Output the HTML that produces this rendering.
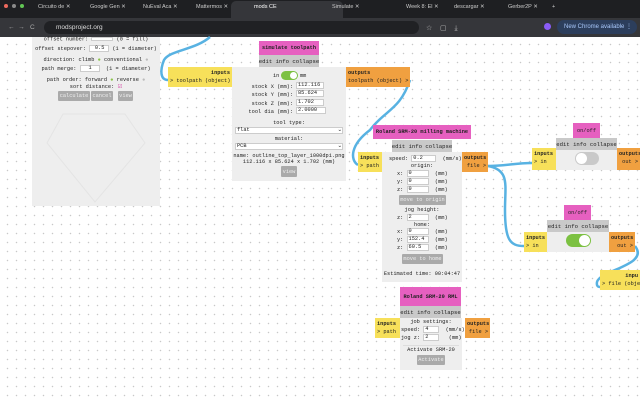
<!DOCTYPE html>
<html><head><meta charset="utf-8"><style>
*{margin:0;padding:0;box-sizing:border-box}
body{width:640px;height:400px;overflow:hidden;position:relative;background:#fff;font-family:"Liberation Mono",monospace;font-size:5.3px;color:#222;white-space:nowrap}
.a{position:absolute}
.grid{left:0;top:37px;width:640px;height:363px;background-image:radial-gradient(circle,#c8c8c8 0.6px,transparent 0.9px);background-size:9px 9px;background-position:3px 3px}
.t{text-align:center;line-height:1}
.pink{background:#e660c0;color:#222;font-weight:bold;display:flex;align-items:center;justify-content:center}
.gray{background:#c9c9c9;display:flex;align-items:center;justify-content:center;font-size:5.6px}
.yel{background:#f7e05a;font-weight:bold;padding:2px 2px;line-height:8px}
.org{background:#f0a040;font-weight:bold;padding:2px 2px;line-height:8px;text-align:right}
.body{background:#eee}
.in{background:#fff;border:1px solid #ccc;height:7px;line-height:5px;display:inline-block;vertical-align:middle;padding-left:1px}
.btn{background:#aaa;color:#eee;border-radius:1px;display:flex;align-items:center;justify-content:center}
.tog{border-radius:7px}
.knob{position:absolute;background:#fff;border-radius:50%}
</style></head><body>
<div class="a" style="left:0;top:0;width:640px;height:18px;background:#1e1f22"></div>
<div class="a" style="left:0;top:18px;width:640px;height:19px;background:#35363a"></div>
<div class="a" style="left:4px;top:4px;width:4px;height:4px;border-radius:50%;background:#ed6a5e"></div>
<div class="a" style="left:12px;top:4px;width:4px;height:4px;border-radius:50%;background:#8a8a8a"></div>
<div class="a" style="left:20px;top:4px;width:4px;height:4px;border-radius:50%;background:#61c554"></div>
<div class="a" style="left:231px;top:1px;width:112px;height:17px;background:#35363a;border-radius:5px 5px 0 0"></div>
<div class="a" style="top:4px;left:0;width:640px;font-family:'Liberation Sans',sans-serif;font-size:5.5px;color:#ccc">
<span class="a" style="left:38px">Circuito de ✕</span><span class="a" style="left:90px">Google Gen ✕</span><span class="a" style="left:143px">NuEval Aca ✕</span><span class="a" style="left:196px">Mattermos ✕</span><span class="a" style="left:254px;color:#fff">mods CE</span><span class="a" style="left:332px">Simulate ✕</span><span class="a" style="left:406px">Week 8: El ✕</span><span class="a" style="left:454px">descargar ✕</span><span class="a" style="left:508px">Gerber2P ✕</span><span class="a" style="left:552px">+</span></div>
<div class="a" style="left:44px;top:21px;width:375px;height:13px;background:#202124;border-radius:7px"></div>
<div class="a" style="left:8px;top:24px;font-family:'Liberation Sans',sans-serif;font-size:6.5px;color:#aaa">←&nbsp;&nbsp;→&nbsp;&nbsp;&nbsp;C</div>
<div class="a" style="left:56px;top:24px;font-family:'Liberation Sans',sans-serif;font-size:6.5px;color:#ddd">modsproject.org</div>
<div class="a" style="left:426px;top:24px;font-family:'Liberation Sans',sans-serif;font-size:7px;color:#bbb">☆&nbsp;&nbsp;&nbsp;&nbsp;▢&nbsp;&nbsp;&nbsp;&nbsp;⤓</div>
<div class="a" style="left:544px;top:23px;width:7px;height:7px;border-radius:50%;background:#8b5cf6"></div>
<div class="a" style="left:557px;top:20px;width:80px;height:14px;border-radius:7px;background:#2c3e5c;color:#a8c7fa;font-family:'Liberation Sans',sans-serif;font-size:6px;line-height:14px;padding-left:7px">New Chrome available ⋮</div>

<div class="a grid"></div>

<svg class="a" style="left:0;top:0" width="640" height="400">
<g fill="none" stroke="#58b2e2" stroke-width="2.5">
<path d="M210 37 C195 50 170 50 164 60 C160 70 160 80 168 80"/>
<path d="M410 80 C400 110 385 110 370 130 C350 145 350 160 358 165"/>
<path d="M488 166 C505 166 515 163 532 163"/>
<path d="M488 166 C510 170 505 185 505 210 C505 240 510 246 524 246"/>
<path d="M635 246 C650 265 600 270 597 282 C596 288 600 287 604 287"/>
</g></svg>

<div class="a body" style="left:32px;top:37px;width:128px;height:169px"></div>
<div class="a t" style="left:32px;top:37px;width:128px">offset number: <span class="in" style="width:22px;height:4px"></span> (0 = fill)</div>
<div class="a t" style="left:32px;top:45px;width:128px">offset stepover: <span class="in" style="width:20px">0.5</span> (1 = diameter)</div>
<div class="a t" style="left:32px;top:58px;width:128px">direction: climb <span style="color:#8bc34a">●</span> conventional <span style="color:#bbb">●</span></div>
<div class="a t" style="left:32px;top:65px;width:128px">path merge: <span class="in" style="width:20px">1</span> &nbsp;(1 = diameter)</div>
<div class="a t" style="left:32px;top:78px;width:128px">path order: forward <span style="color:#8bc34a">●</span> reverse <span style="color:#bbb">●</span></div>
<div class="a t" style="left:32px;top:85px;width:128px">sort distance: <span style="color:#d33fa0">☑</span></div>
<div class="a btn" style="left:58px;top:91px;width:32px;height:10px">calculate</div>
<div class="a btn" style="left:91px;top:91px;width:22px;height:10px">cancel</div>
<div class="a btn" style="left:118px;top:91px;width:15px;height:10px">view</div>
<svg class="a" style="left:40px;top:110px" width="110" height="95"><path d="M23 4 L85 4 L105 33 L55 92 L7 33 Z" fill="none" stroke="#e4e4e4" stroke-width="1"/></svg>

<div class="a pink" style="left:259px;top:41px;width:60px;height:14px">simulate toolpath</div>
<div class="a gray" style="left:259px;top:55px;width:60px;height:12px">edit info collapse</div>
<div class="a yel" style="left:168px;top:67px;width:64px;height:20px;text-align:right">inputs<br><span style="float:left;font-weight:normal">&gt; toolpath (object)</span></div>
<div class="a body" style="left:232px;top:67px;width:114px;height:114px"></div>
<div class="a org" style="left:346px;top:67px;width:64px;height:20px;text-align:left">outputs<br><span style="font-weight:normal">toolpath (object) &gt;</span></div>
<div class="a" style="left:273px;top:73px">in</div>
<div class="a tog" style="left:281px;top:71px;width:17px;height:9px;background:#7cc142"><div class="knob" style="left:9px;top:1px;width:7px;height:7px"></div></div>
<div class="a" style="left:300px;top:73px">mm</div>
<div class="a" style="left:240px;top:83px;line-height:8.3px;text-align:right;width:53px">stock X (mm):<br>stock Y (mm):<br>stock Z (mm):<br>tool dia (mm):</div>
<div class="a" style="left:296px;top:82px;line-height:8.3px">
<div class="in" style="width:28px;display:block;margin-bottom:1.3px">112.116</div><div class="in" style="width:28px;display:block;margin-bottom:1.3px">85.624</div><div class="in" style="width:28px;display:block;margin-bottom:1.3px">1.702</div><div class="in" style="width:30px;display:block">2.0000</div></div>
<div class="a t" style="left:232px;top:121px;width:114px">tool type:</div>
<div class="a" style="left:235px;top:127px;width:108px;height:7px;background:#fff;border:1px solid #ccc;line-height:5px;padding-left:1px">flat<span style="float:right">⌄</span></div>
<div class="a t" style="left:232px;top:137px;width:114px">material:</div>
<div class="a" style="left:235px;top:143px;width:108px;height:7px;background:#fff;border:1px solid #ccc;line-height:5px;padding-left:1px">PCB<span style="float:right">⌄</span></div>
<div class="a t" style="left:232px;top:153px;width:114px;line-height:6px">name: outline_top_layer_1000dpi.png<br>112.116 x 85.624 x 1.702 (mm)</div>
<div class="a btn" style="left:281px;top:166px;width:16px;height:11px">view</div>

<div class="a pink" style="left:373px;top:125px;width:98px;height:14px">Roland SRM-20 milling machine</div>
<div class="a gray" style="left:392px;top:140px;width:60px;height:12px">edit info collapse</div>
<div class="a yel" style="left:358px;top:152px;width:24px;height:20px">inputs<br><span style="font-weight:normal">&gt; path</span></div>
<div class="a body" style="left:382px;top:152px;width:80px;height:130px"></div>
<div class="a org" style="left:462px;top:152px;width:26px;height:20px">outputs<br><span style="font-weight:normal">file &gt;</span></div>
<div class="a" style="left:389px;top:155px">speed: <span class="in" style="width:25px">0.2</span> &nbsp;(mm/s)</div>
<div class="a t" style="left:382px;top:164px;width:80px">origin:</div>
<div class="a" style="left:397px;top:170px;line-height:8px">x: <span class="in" style="width:22px">0</span> &nbsp;(mm)<br>y: <span class="in" style="width:22px">0</span> &nbsp;(mm)<br>z: <span class="in" style="width:22px">0</span> &nbsp;(mm)</div>
<div class="a btn" style="left:399px;top:195px;width:47px;height:10px">move to origin</div>
<div class="a t" style="left:382px;top:208px;width:80px">jog height:</div>
<div class="a" style="left:397px;top:214px">z: <span class="in" style="width:22px">2</span> &nbsp;(mm)</div>
<div class="a t" style="left:382px;top:223px;width:80px">home:</div>
<div class="a" style="left:397px;top:228px;line-height:8px">x: <span class="in" style="width:22px">0</span> &nbsp;(mm)<br>y: <span class="in" style="width:22px">152.4</span> &nbsp;(mm)<br>z: <span class="in" style="width:22px">60.5</span> &nbsp;(mm)</div>
<div class="a btn" style="left:402px;top:254px;width:41px;height:10px">move to home</div>
<div class="a t" style="left:382px;top:272px;width:80px">Estimated time: 00:04:47</div>

<div class="a pink" style="left:573px;top:123px;width:27px;height:15px;font-weight:normal">on/off</div>
<div class="a gray" style="left:556px;top:138px;width:61px;height:12px">edit info collapse</div>
<div class="a yel" style="left:532px;top:148px;width:24px;height:22px">inputs<br><span style="font-weight:normal">&gt; in</span></div>
<div class="a body" style="left:556px;top:150px;width:61px;height:20px"></div>
<div class="a tog" style="left:575px;top:152px;width:24px;height:13px;background:#c9c9c9"><div class="knob" style="left:1px;top:1px;width:11px;height:11px"></div></div>
<div class="a org" style="left:617px;top:148px;width:30px;height:22px;text-align:left">outputs<br><span style="font-weight:normal">&nbsp;out &gt;</span></div>

<div class="a pink" style="left:564px;top:205px;width:27px;height:15px;font-weight:normal">on/off</div>
<div class="a gray" style="left:547px;top:220px;width:62px;height:12px">edit info collapse</div>
<div class="a yel" style="left:524px;top:232px;width:23px;height:20px">inputs<br><span style="font-weight:normal">&gt; in</span></div>
<div class="a body" style="left:547px;top:232px;width:62px;height:20px"></div>
<div class="a tog" style="left:566px;top:234px;width:25px;height:13px;background:#7cc142"><div class="knob" style="left:13px;top:1px;width:11px;height:11px"></div></div>
<div class="a org" style="left:609px;top:232px;width:26px;height:20px">outputs<br><span style="font-weight:normal">out &gt;</span></div>

<div class="a yel" style="left:600px;top:270px;width:40px;height:20px;text-align:right;overflow:hidden">inpu<br><span style="font-weight:normal;float:left">&gt; file (objec</span></div>

<div class="a pink" style="left:400px;top:287px;width:61px;height:19px">Roland SRM-20 RML</div>
<div class="a gray" style="left:400px;top:306px;width:61px;height:12px">edit info collapse</div>
<div class="a yel" style="left:375px;top:318px;width:25px;height:20px">inputs<br><span style="font-weight:normal">&gt; path</span></div>
<div class="a body" style="left:400px;top:318px;width:62px;height:52px"></div>
<div class="a org" style="left:465px;top:318px;width:25px;height:20px">outputs<br><span style="font-weight:normal">file &gt;</span></div>
<div class="a t" style="left:400px;top:320px;width:62px">job settings:</div>
<div class="a" style="left:401px;top:326px;line-height:8px">speed: <span class="in" style="width:16px">4</span> &nbsp;(mm/s)<br>jog z: <span class="in" style="width:16px">2</span> &nbsp;&nbsp;(mm)</div>
<div class="a" style="left:403px;top:345px;width:56px;border-top:1px solid #ddd"></div>
<div class="a t" style="left:400px;top:348px;width:62px">Activate SRM-20</div>
<div class="a btn" style="left:417px;top:355px;width:28px;height:10px">Activate</div>
</body></html>
